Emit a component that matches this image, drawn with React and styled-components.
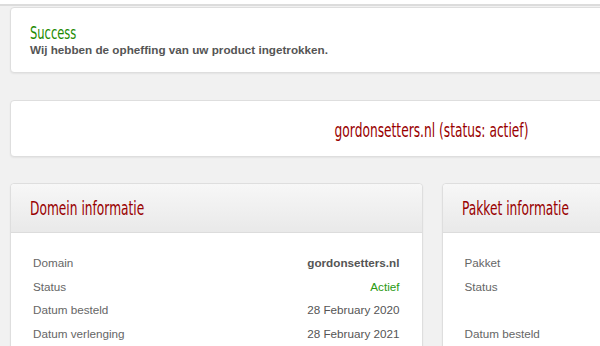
import styled, { createGlobalStyle } from "styled-components";

const GlobalStyle = createGlobalStyle`
  html, body {
    margin: 0;
    padding: 0;
    overflow: hidden;
  }
  body {
    background-color: #f1f1f1;
    font-family: "Liberation Sans", Arial, sans-serif;
  }
`;

const TopBar = styled.div`
  height: 4px;
  background: #fff;
  border-bottom: 2px solid #dcdcdc;
`;

const Page = styled.div`
  width: 844px;
  padding: 1px 10px 0;
`;

const Card = styled.div`
  background: #fff;
  border: 1px solid #dedede;
  border-radius: 4px;
  box-shadow: 0 1px 2px rgba(0, 0, 0, 0.06);
  margin-bottom: ${(p) => p.gap || 26}px;
`;

const Alert = styled(Card)`
  height: 66px;
  padding: 16px 19px 0;
  box-sizing: border-box;
`;

const Condensed = styled.span`
  display: inline-block;
  font-family: "DejaVu Sans Condensed", "DejaVu Sans", sans-serif;
  transform: scaleX(${(p) => p.sx || 0.7});
  transform-origin: ${(p) => (p.center ? "center" : "left")};
  white-space: nowrap;
`;

const AlertTitle = styled.div`
  font-size: 18px;
  color: #1c8a00;
  line-height: 18px;
`;

const AlertText = styled.div`
  font-size: 11.7px;
  font-weight: bold;
  color: #555;
  line-height: 15px;
`;

const Banner = styled(Card)`
  height: 55px;
  display: flex;
  align-items: center;
  justify-content: center;
`;

const BannerText = styled.div`
  font-size: 20px;
  color: #990000;
  padding-top: 2px;
`;

const Columns = styled.div`
  display: grid;
  grid-template-columns: 1fr 1fr;
  gap: 19px;
`;

const Panel = styled(Card)`
  margin-bottom: 0;
  height: 200px;
`;

const PanelHead = styled.div`
  height: 48px;
  display: flex;
  align-items: center;
  padding: 0 19px;
  border-bottom: 1px solid #dcdcdc;
  border-radius: 4px 4px 0 0;
  background: linear-gradient(#f7f7f7, #e9e9e9);
`;

const PanelTitle = styled.h2`
  margin: 0;
  font-weight: normal;
  font-size: 20px;
  color: #990000;
`;

const PanelBody = styled.div`
  padding: 22px 22px 0;
`;

const Row = styled.div`
  display: flex;
  justify-content: space-between;
  height: ${(p) => (p.tall ? 47 : 23.5)}px;
  font-size: 11.7px;
  line-height: 16px;
  color: #666;
`;

const Value = styled.span`
  color: ${(p) => (p.green ? "#2a9a12" : "#555")};
  font-weight: ${(p) => (p.bold ? "bold" : "normal")};
`;

export default function App() {
  return (
    <>
      <GlobalStyle />
      <TopBar />
      <Page>
        <Alert gap={27}>
          <AlertTitle>
            <Condensed sx={0.71}>Success</Condensed>
          </AlertTitle>
          <AlertText>Wij hebben de opheffing van uw product ingetrokken.</AlertText>
        </Alert>
        <Banner gap={26}>
          <BannerText>
            <Condensed center sx={0.68}>gordonsetters.nl (status: actief)</Condensed>
          </BannerText>
        </Banner>
        <Columns>
          <Panel>
            <PanelHead>
              <PanelTitle>
                <Condensed sx={0.68}>Domein informatie</Condensed>
              </PanelTitle>
            </PanelHead>
            <PanelBody>
              <Row>
                <span>Domain</span>
                <Value bold>gordonsetters.nl</Value>
              </Row>
              <Row>
                <span>Status</span>
                <Value green>Actief</Value>
              </Row>
              <Row>
                <span>Datum besteld</span>
                <Value>28 February 2020</Value>
              </Row>
              <Row>
                <span>Datum verlenging</span>
                <Value>28 February 2021</Value>
              </Row>
            </PanelBody>
          </Panel>
          <Panel>
            <PanelHead>
              <PanelTitle>
                <Condensed sx={0.68}>Pakket informatie</Condensed>
              </PanelTitle>
            </PanelHead>
            <PanelBody>
              <Row>
                <span>Pakket</span>
              </Row>
              <Row tall>
                <span>Status</span>
              </Row>
              <Row>
                <span>Datum besteld</span>
              </Row>
            </PanelBody>
          </Panel>
        </Columns>
      </Page>
    </>
  );
}
